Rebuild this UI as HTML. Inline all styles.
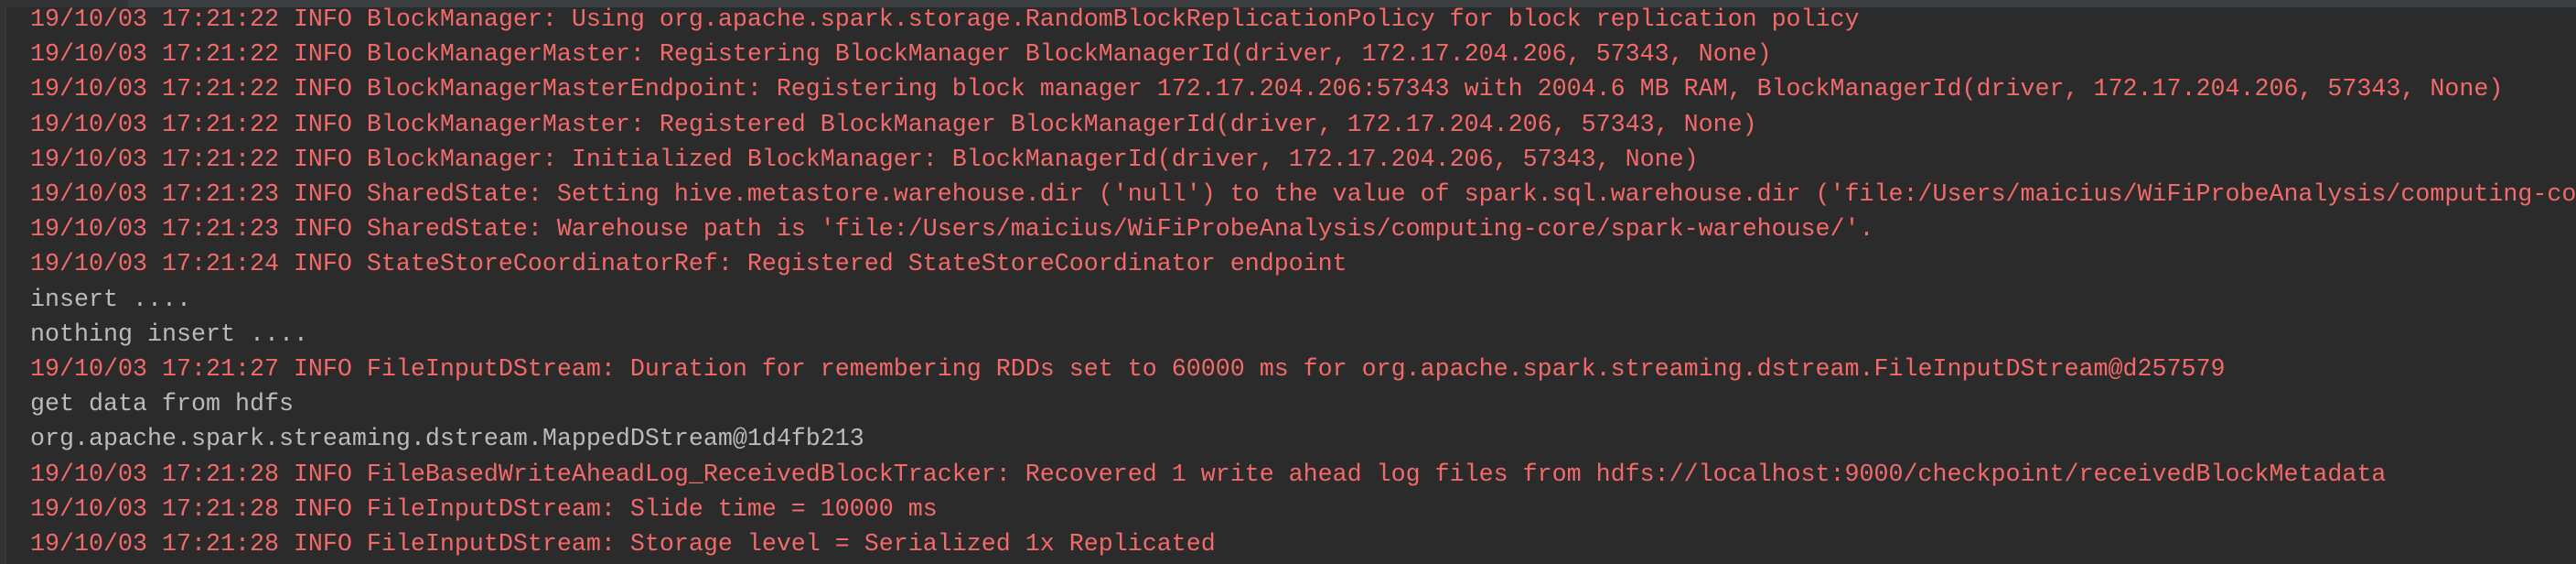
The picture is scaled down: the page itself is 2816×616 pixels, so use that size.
<!DOCTYPE html>
<html><head><meta charset="utf-8"><style>
html,body{margin:0;padding:0;background:#2b2b2b;width:2816px;height:616px;overflow:hidden}
#top{position:absolute;left:0;top:0;width:2816px;height:8px;background:#3c3f41}
#topl{position:absolute;left:0;top:0;width:140px;height:8px;background:#323436}
#gut{position:absolute;left:0;top:8px;width:6px;height:608px;background:#313335;border-right:1px solid #3a3c3e}
#log{position:absolute;left:33px;top:3px;width:2783px;height:613px;overflow:hidden;font-family:"Liberation Mono",monospace;font-size:26.67px;line-height:38.2px;white-space:pre;color:#f26a6a}
.w{color:#bbbbbb}
</style></head><body>
<div id="top"></div><div id="topl"></div><div id="gut"></div>
<div id="log">19/10/03 17:21:22 INFO BlockManager: Using org.apache.spark.storage.RandomBlockReplicationPolicy for block replication policy
19/10/03 17:21:22 INFO BlockManagerMaster: Registering BlockManager BlockManagerId(driver, 172.17.204.206, 57343, None)
19/10/03 17:21:22 INFO BlockManagerMasterEndpoint: Registering block manager 172.17.204.206:57343 with 2004.6 MB RAM, BlockManagerId(driver, 172.17.204.206, 57343, None)
19/10/03 17:21:22 INFO BlockManagerMaster: Registered BlockManager BlockManagerId(driver, 172.17.204.206, 57343, None)
19/10/03 17:21:22 INFO BlockManager: Initialized BlockManager: BlockManagerId(driver, 172.17.204.206, 57343, None)
19/10/03 17:21:23 INFO SharedState: Setting hive.metastore.warehouse.dir ('null') to the value of spark.sql.warehouse.dir ('file:/Users/maicius/WiFiProbeAnalysis/computing-co</div>
<div id="log2" style="display:none"></div>
<style>#log{height:613px}</style>
<div style="position:absolute;left:33px;top:232.2px;width:2783px;overflow:hidden;font-family:'Liberation Mono',monospace;font-size:26.67px;line-height:38.2px;white-space:pre;color:#f26a6a">19/10/03 17:21:23 INFO SharedState: Warehouse path is 'file:/Users/maicius/WiFiProbeAnalysis/computing-core/spark-warehouse/'.
19/10/03 17:21:24 INFO StateStoreCoordinatorRef: Registered StateStoreCoordinator endpoint
<span class="w">insert ....</span>
<span class="w">nothing insert ....</span>
19/10/03 17:21:27 INFO FileInputDStream: Duration for remembering RDDs set to 60000 ms for org.apache.spark.streaming.dstream.FileInputDStream@d257579
<span class="w">get data from hdfs</span>
<span class="w">org.apache.spark.streaming.dstream.MappedDStream@1d4fb213</span>
19/10/03 17:21:28 INFO FileBasedWriteAheadLog_ReceivedBlockTracker: Recovered 1 write ahead log files from hdfs://localhost:9000/checkpoint/receivedBlockMetadata
19/10/03 17:21:28 INFO FileInputDStream: Slide time = 10000 ms
19/10/03 17:21:28 INFO FileInputDStream: Storage level = Serialized 1x Replicated</div>
</body></html>
